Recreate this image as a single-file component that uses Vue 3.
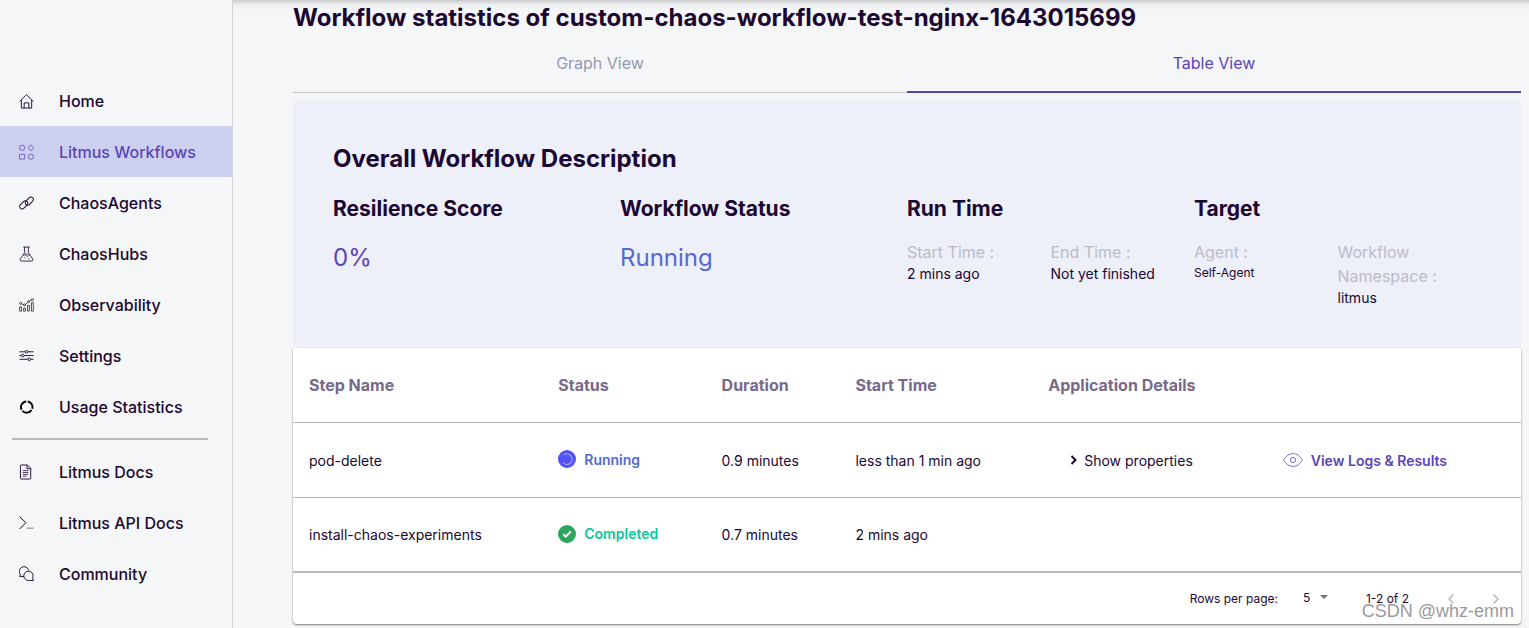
<script setup>
import { ref } from 'vue'

const primaryLinks = [
  { label: 'Home', icon: 'home' },
  { label: 'Litmus Workflows', icon: 'workflows', active: true },
  { label: 'ChaosAgents', icon: 'link' },
  { label: 'ChaosHubs', icon: 'flask' },
  { label: 'Observability', icon: 'chart' },
  { label: 'Settings', icon: 'sliders' },
  { label: 'Usage Statistics', icon: 'usage' },
]
const secondaryLinks = [
  { label: 'Litmus Docs', icon: 'doc' },
  { label: 'Litmus API Docs', icon: 'terminal' },
  { label: 'Community', icon: 'chat' },
]
const groups = [primaryLinks, secondaryLinks]

const steps = [
  { name: 'pod-delete', status: 'Running', duration: '0.9 minutes', start: 'less than 1 min ago', details: true },
  { name: 'install-chaos-experiments', status: 'Completed', duration: '0.7 minutes', start: '2 mins ago', details: false },
]
const rowsPerPage = ref('5')
</script>

<template>
  <div class="layout">
    <nav class="sidebar" aria-label="Main">
      <ul v-for="(group, g) in groups" :key="g" class="nav-group">
        <li v-for="item in group" :key="item.label">
          <a href="#" class="nav-link" :class="{ active: item.active }">
            <svg class="nav-icon" viewBox="0 0 16 16" aria-hidden="true">
              <g v-if="item.icon === 'home'">
                <path d="M.7 8.500 8 1.300l7.300 7.200M2.500 7v8.500h11V7M5.500 15.500v-5.500h5v5.500" />
              </g>
              <g v-else-if="item.icon === 'workflows'" class="thin">
                <circle cx="3.300" cy="3.500" r="2.800" />
                <path d="m12.700.4 3.100 3.100-3.100 3.100-3.100-3.100zM.5 10.500h5.500v5H.5z" />
                <circle cx="12.700" cy="13" r="2.800" />
              </g>
              <g v-else-if="item.icon === 'link'">
                <rect x="-5" y="-2.600" width="10" height="5.200" rx="2.600" transform="translate(5 10) rotate(-47)" />
                <rect x="-5" y="-2.600" width="10" height="5.200" rx="2.600" transform="translate(11 6) rotate(-47)" />
              </g>
              <g v-else-if="item.icon === 'flask'" class="flask">
                <path d="M4.500.6h7M6 .6v6L1.400 13.300c-.7 1.200-.1 2.200 1.200 2.200h10.800c1.300 0 1.900-1 1.200-2.200L10 6.600v-6M4.500 9h7" />
                <path d="M7.500 7v1M9 10.300v1M6 11.600v1M10.600 12.500v1" />
              </g>
              <g v-else-if="item.icon === 'chart'" class="chart">
                <path d="M.7 10h2v4.500h-2zM4.900 11.500h2v3h-2zM9.100 8.500h2v6h-2zM13.300 5.500h2v9h-2z" />
                <path d="m2.700 6.700 2.500 1M7 7.500l2.500-2.600M11 4l2.500-1.300" />
                <circle cx="1.700" cy="6.200" r="1.100" /><circle cx="6" cy="8" r="1.100" />
                <circle cx="10.200" cy="4.400" r="1.100" /><circle cx="14.300" cy="2.300" r="1.100" />
              </g>
              <g v-else-if="item.icon === 'sliders'">
                <path d="M.5 3.500h6M9.500 3.500h6M.5 7.500h2M5.500 7.500h10M.5 11.500h9M12.500 11.500h3" />
                <circle cx="8" cy="3.500" r="1.400" /><circle cx="4" cy="7.500" r="1.400" /><circle cx="11" cy="11.500" r="1.400" />
              </g>
              <g v-else-if="item.icon === 'usage'" class="ring">
                <path d="M9.300 2.100a6 6 0 0 1 4.800 7.700M13.300 11.100a6 6 0 0 1-9.700.9M2.800 10.900A6 6 0 0 1 7.700 2.100" />
              </g>
              <g v-else-if="item.icon === 'doc'">
                <path d="M1.500 1.500q0-1 1-1h6.500l3.500 3.500v10.500q0 1-1 1h-9q-1 0-1-1zM8.500.8v3.700h4" />
                <path class="lines" d="M4 6.500h6M4 8.500h6M4 10.500h6M4 12.500h4" />
              </g>
              <g v-else-if="item.icon === 'terminal'" class="black">
                <path d="m.6 1 6.700 6.700L.6 14.400" /><path class="faint" d="M8.300 13.500h7.200" />
              </g>
              <g v-else>
                <path d="M5.300 10.600H.7l.8-2A5.100 5.100 0 1 1 10.300 4" />
                <path d="M14.400 12.600a5 5 0 1 0-3.200 2.300h4.300z" />
              </g>
            </svg>
            <span>{{ item.label }}</span>
          </a>
        </li>
      </ul>
    </nav>

    <main class="content">
      <h1>Workflow statistics of custom-chaos-workflow-test-nginx-1643015699</h1>
      <div class="tabs" role="tablist">
        <button type="button" role="tab" aria-selected="false">Graph View</button>
        <button type="button" role="tab" aria-selected="true" class="selected">Table View</button>
      </div>

      <section class="overview">
        <h2>Overall Workflow Description</h2>
        <div class="overview-grid">
          <div>
            <h3>Resilience Score</h3>
            <p class="figure score">0%</p>
          </div>
          <div>
            <h3>Workflow Status</h3>
            <p class="figure state">Running</p>
          </div>
          <div>
            <h3>Run Time</h3>
            <dl>
              <div><dt>Start Time :</dt><dd>2 mins ago</dd></div>
              <div><dt>End Time :</dt><dd>Not yet finished</dd></div>
            </dl>
          </div>
          <div>
            <h3>Target</h3>
            <dl>
              <div><dt>Agent :</dt><dd class="small">Self-Agent</dd></div>
              <div><dt>Workflow Namespace :</dt><dd>litmus</dd></div>
            </dl>
          </div>
        </div>
      </section>

      <section class="card">
        <table>
          <colgroup>
            <col class="c-name"><col class="c-status"><col class="c-duration"><col class="c-start"><col class="c-details"><col>
          </colgroup>
          <thead>
            <tr>
              <th>Step Name</th><th>Status</th><th>Duration</th><th>Start Time</th><th>Application Details</th><td></td>
            </tr>
          </thead>
          <tbody>
            <tr v-for="step in steps" :key="step.name">
              <td>{{ step.name }}</td>
              <td>
                <span class="status" :class="step.status.toLowerCase()">
                  <svg viewBox="0 0 18 18" aria-hidden="true">
                    <circle class="disc" cx="9" cy="9" r="9" />
                    <path v-if="step.status === 'Running'" class="spin" d="M6 4.800A5.200 5.200 0 1 1 5 12.600" />
                    <path v-else class="check" d="m5.300 9.300 2.500 2.400 4.900-5.200" />
                  </svg>
                  {{ step.status }}
                </span>
              </td>
              <td>{{ step.duration }}</td>
              <td>{{ step.start }}</td>
              <td>
                <button v-if="step.details" type="button" class="toggle">
                  <svg viewBox="0 0 8 12" aria-hidden="true"><path d="m1.500 2 4 4-4 4" /></svg>
                  Show properties
                </button>
              </td>
              <td>
                <button v-if="step.details" type="button" class="logs">
                  <svg viewBox="0 0 20 14" aria-hidden="true">
                    <path d="M.6 7C3 3 6.200.6 10 .6S17 3 19.400 7C17 11 13.800 13.400 10 13.400S3 11 .6 7z" />
                    <circle cx="10" cy="7" r="2.600" />
                  </svg>
                  View Logs &amp; Results
                </button>
              </td>
            </tr>
          </tbody>
        </table>
        <div class="pagination">
          <label for="rows">Rows per page:</label>
          <span class="select">
            <select id="rows" v-model="rowsPerPage">
              <option>5</option><option>10</option><option>25</option>
            </select>
            <svg viewBox="0 0 8 4" aria-hidden="true"><path d="M0 0h8L4 4z" /></svg>
          </span>
          <span class="range">1-2 of 2</span>
          <button type="button" class="page" aria-label="Previous page" disabled>
            <svg viewBox="0 0 8 12" aria-hidden="true"><path d="M6.500 1.500 2 6l4.500 4.500" /></svg>
          </button>
          <button type="button" class="page" aria-label="Next page" disabled>
            <svg viewBox="0 0 8 12" aria-hidden="true"><path d="M1.500 1.500 6 6l-4.500 4.500" /></svg>
          </button>
        </div>
      </section>
    </main>
    <div class="watermark">CSDN @whz-emm</div>
  </div>
</template>

<style>
body {
  background: #f5f6f8;
}
</style>

<style scoped>
* {
  box-sizing: border-box;
}
.layout {
  position: relative;
  display: flex;
  min-height: 100vh;
  overflow: hidden;
  font-family: Inter, "Liberation Sans", sans-serif;
  font-size: 14px;
  color: #1c0732;
}
button,
select {
  font: inherit;
  color: inherit;
  background: none;
  border: 0;
  padding: 0;
}
svg {
  flex: none;
  fill: none;
  stroke: currentColor;
}
h1,
h2,
h3,
p,
dl,
dd,
ul {
  margin: 0;
  padding: 0;
}

.sidebar {
  flex: none;
  width: 233px;
  padding-top: 75px;
  border-right: 1px solid #d1d2d7;
}
.nav-group {
  list-style: none;
}
.nav-group + .nav-group::before {
  content: "";
  display: block;
  height: 2px;
  margin: 6px 24px 6px 12px;
  background: #b9babc;
}
.nav-link {
  display: flex;
  align-items: center;
  gap: 24px;
  height: 51px;
  padding-left: 19px;
  font-size: 16px;
  font-weight: 500;
  color: inherit;
  text-decoration: none;
}
.nav-link.active {
  background: #cccfee;
  color: #5b44ba;
}
.nav-icon {
  width: 15px;
  height: 16px;
  margin-right: 1px;
}
.thin {
  stroke-width: 0.8;
}
.flask {
  stroke-width: 0.9;
}
.chart {
  stroke: #333;
  stroke-width: 0.9;
}
.ring {
  stroke: #000;
  stroke-width: 2;
}
.black {
  stroke: #000;
}
.faint {
  stroke: #777;
}
.lines {
  stroke-width: 0.8;
}

.content {
  flex: 1;
  min-width: 0;
  padding: 0 8px 0 60px;
  background: linear-gradient(#c9cacc, #d9dadc 2px, #eeeff1 5px, #f5f6f8 10px);
}
h1,
h2 {
  font-size: 24px;
  line-height: 36px;
  font-weight: 700;
}
.tabs {
  display: flex;
  margin-bottom: 8px;
}
.tabs button {
  flex: 1;
  height: 57px;
  padding-bottom: 3px;
  border-bottom: 1px solid #c5c7ca;
  font-size: 16px;
  color: #949ab1;
}
.tabs .selected {
  padding-bottom: 2px;
  border-bottom: 2px solid #5b44ba;
  color: #5b44ba;
}

.overview {
  padding: 40px;
  background: #edeff9;
}
.overview-grid {
  display: grid;
  grid-template-columns: repeat(4, 1fr);
  margin-top: 16px;
}
h3 {
  font-size: 21px;
  line-height: 32px;
  font-weight: 700;
}
.figure {
  margin-top: 15px;
  font-size: 24px;
  line-height: 36px;
}
.score {
  color: #5b44ba;
}
.state {
  color: #5469d4;
}
dl {
  display: grid;
  grid-template-columns: 1fr 1fr;
  margin-top: 15px;
}
dt {
  font-size: 16px;
  line-height: 24px;
  color: #bdbbc8;
}
dd {
  line-height: 20px;
}
.small {
  font-size: 12px;
  line-height: 18px;
}

.card {
  overflow: hidden;
  background: #fff;
  border-radius: 0 0 4px 4px;
  box-shadow: 0 1px 2px rgba(0, 0, 0, 0.5);
}
table {
  width: 100%;
  table-layout: fixed;
  border-collapse: separate;
  border-spacing: 0;
}
.c-name { width: 20.3%; }
.c-status { width: 13.3%; }
.c-duration { width: 10.9%; }
.c-start { width: 15.7%; }
.c-details { width: 19.1%; }
th,
td {
  height: 75px;
  padding: 0 16px;
  border-bottom: 1px solid #b7b9ba;
  text-align: left;
  white-space: nowrap;
}
tbody tr:last-child td {
  border-bottom: 2px solid #b7b9ba;
}
th {
  font-size: 16px;
  font-weight: 700;
  color: #77698a;
}
.status,
.toggle,
.logs {
  display: flex;
  align-items: center;
  gap: 8px;
}
.status {
  font-weight: 600;
  padding-bottom: 2px;
}
.status svg {
  width: 18px;
  height: 18px;
}
.disc {
  fill: currentColor;
  stroke: none;
}
.running {
  color: #5469d4;
}
.running .disc {
  fill: #5252f6;
}
.completed {
  color: #09c99b;
}
.completed .disc {
  fill: #2ca55d;
}
.spin {
  stroke: #aaa9fb;
  stroke-width: 1.2;
}
.check {
  stroke: #fff;
  stroke-width: 2;
}
.toggle {
  gap: 6px;
  padding-left: 22px;
}
.toggle svg {
  width: 8px;
  height: 12px;
  stroke-width: 2;
}
.logs {
  font-weight: 600;
  color: #5b44ba;
}
.logs svg {
  width: 20px;
  height: 14px;
  stroke-width: 0.8;
}

.pagination {
  display: flex;
  align-items: center;
  justify-content: flex-end;
  height: 51px;
  padding-right: 15px;
  font-size: 12px;
}
.select {
  display: flex;
  align-items: center;
  gap: 8px;
  margin: 0 38px 3px 25px;
}
.select select {
  appearance: none;
  width: 9px;
}
.select svg {
  width: 8px;
  height: 4px;
  fill: #757575;
  stroke: none;
}
.range {
  margin-right: 32px;
}
.page {
  display: flex;
  justify-content: center;
  width: 20px;
  margin-right: 25px;
  color: #b9b9b9;
}
.page:last-child {
  margin-right: 0;
}
.page svg {
  width: 8px;
  height: 12px;
  stroke-width: 1.5;
}
.watermark {
  position: absolute;
  right: 15px;
  bottom: 4px;
  font-family: "Liberation Sans", sans-serif;
  font-size: 18px;
  line-height: 26px;
  color: #999a9c;
  text-shadow: -1px -1px 0 #fff;
}
</style>
